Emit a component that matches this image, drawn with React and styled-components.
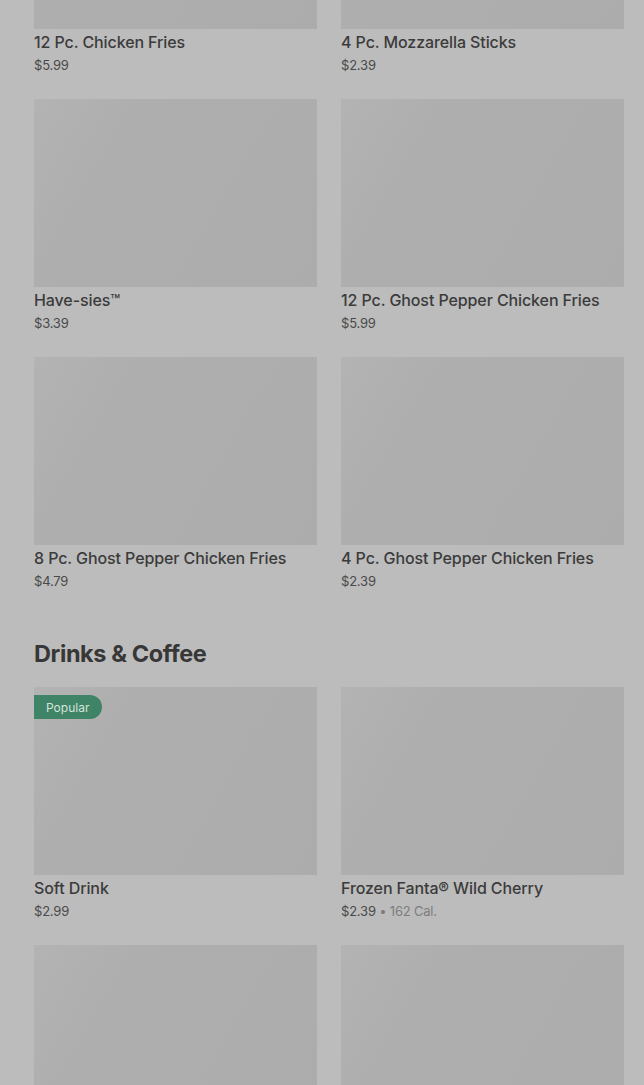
import React from 'react';
import styled, { createGlobalStyle } from 'styled-components';

const Global = createGlobalStyle`
  html, body {
    margin: 0;
    padding: 0;
    background: #bcbcbc;
    overflow: hidden;
  }
  body {
    font-family: Inter, "Liberation Sans", sans-serif;
    color: #3a3a3a;
  }
`;

const Page = styled.div`
  height: 1085px;
  overflow: hidden;
  padding: 0 20px 0 34px;
  box-sizing: border-box;
`;

const Grid = styled.div`
  display: grid;
  grid-template-columns: 283px 283px;
  column-gap: 24px;
  row-gap: 24px;
  margin-top: ${p => p.$offset || 0}px;
`;

const Section = styled.section`
  margin-top: 47px;
`;

const Heading = styled.h2`
  margin: 0 0 17px;
  font-size: 23.5px;
  line-height: 32px;
  font-weight: 700;
  letter-spacing: -0.4px;
  color: #373737;
`;

const Card = styled.div`
  display: flex;
  flex-direction: column;
`;

const Thumb = styled.div`
  position: relative;
  height: 188px;
  background: linear-gradient(120deg, #b3b3b3 0%, #aeaeae 30%, #acacac 100%);
`;

const Badge = styled.span`
  position: absolute;
  top: 8px;
  left: 0;
  height: 24px;
  padding: 0 13px 0 12px;
  display: flex;
  align-items: center;
  background: #3f8466;
  color: #d6e2dc;
  font-size: 12px;
  border-radius: 0 12px 12px 0;
`;

const Title = styled.div`
  font-size: 16px;
  line-height: 22px;
  font-weight: 500;
  margin-top: 2px;
  letter-spacing: -0.1px;
  color: #3b3b3b;
  white-space: nowrap;
`;

const Price = styled.div`
  font-size: 13px;
  line-height: 20px;
  margin-top: 2px;
  color: #4a4a4a;
  letter-spacing: -0.2px;
`;

const Cal = styled.span`
  color: #7d7d7d;
`;

const Item = ({ title, price, cal, badge }) => (
  <Card>
    <Thumb>{badge && <Badge>{badge}</Badge>}</Thumb>
    <Title>{title}</Title>
    <Price>
      {price}
      {cal && <Cal> • {cal}</Cal>}
    </Price>
  </Card>
);

const sides = [
  { title: '12 Pc. Chicken Fries', price: '$5.99' },
  { title: '4 Pc. Mozzarella Sticks', price: '$2.39' },
  { title: 'Have-sies™', price: '$3.39' },
  { title: '12 Pc. Ghost Pepper Chicken Fries', price: '$5.99' },
  { title: '8 Pc. Ghost Pepper Chicken Fries', price: '$4.79' },
  { title: '4 Pc. Ghost Pepper Chicken Fries', price: '$2.39' },
];

const drinks = [
  { title: 'Soft Drink', price: '$2.99', badge: 'Popular' },
  { title: 'Frozen Fanta® Wild Cherry', price: '$2.39', cal: '162 Cal.' },
  { title: '', price: '' },
  { title: '', price: '' },
];

export default function App() {
  return (
    <Page>
      <Global />
      <Grid $offset={-159}>
        {sides.map((s, i) => <Item key={i} {...s} />)}
      </Grid>
      <Section>
        <Heading>Drinks &amp; Coffee</Heading>
        <Grid>
          {drinks.map((s, i) => <Item key={i} {...s} />)}
        </Grid>
      </Section>
    </Page>
  );
}
